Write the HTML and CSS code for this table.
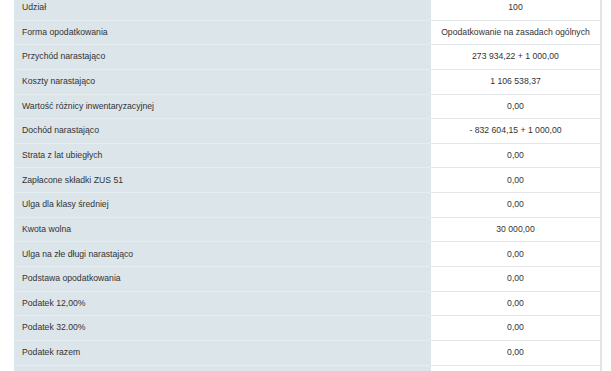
FILE: index.html
```html
<!DOCTYPE html>
<html lang="pl">
<head>
<meta charset="utf-8">
<title>Podsumowanie</title>
<link rel="stylesheet" href="styles.css">
</head>
<body>
<div class="page">
  <table class="summary">
    <tbody>
      <tr><th>Udział</th><td>100</td></tr>
      <tr><th>Forma opodatkowania</th><td>Opodatkowanie na zasadach ogólnych</td></tr>
      <tr><th>Przychód narastająco</th><td>273 934,22 + 1 000,00</td></tr>
      <tr><th>Koszty narastająco</th><td>1 106 538,37</td></tr>
      <tr><th>Wartość różnicy inwentaryzacyjnej</th><td>0,00</td></tr>
      <tr><th>Dochód narastająco</th><td>- 832 604,15 + 1 000,00</td></tr>
      <tr><th>Strata z lat ubiegłych</th><td>0,00</td></tr>
      <tr><th>Zapłacone składki ZUS 51</th><td>0,00</td></tr>
      <tr><th>Ulga dla klasy średniej</th><td>0,00</td></tr>
      <tr><th>Kwota wolna</th><td>30 000,00</td></tr>
      <tr><th>Ulga na złe długi narastająco</th><td>0,00</td></tr>
      <tr><th>Podstawa opodatkowania</th><td>0,00</td></tr>
      <tr><th>Podatek 12,00%</th><td>0,00</td></tr>
      <tr><th>Podatek 32.00%</th><td>0,00</td></tr>
      <tr><th>Podatek razem</th><td>0,00</td></tr>
      <tr><th>&nbsp;</th><td>&nbsp;</td></tr>
    </tbody>
  </table>
</div>
</body>
</html>
```
FILE: styles.css
```css
html, body {
  margin: 0;
  padding: 0;
  background: #ffffff;
}

.page {
  padding-left: 14px;
  margin-top: -5px;
}

.summary {
  border-collapse: collapse;
  width: 588px;
  table-layout: fixed;
  font-family: "Liberation Sans", Arial, sans-serif;
  font-size: 8.67px;
  line-height: 13.33px;
  color: #333333;
}

.summary th,
.summary td {
  height: 13.33px;
  padding: 5.17px 8px;
  border-top: 1px solid #e2e6e9;
  vertical-align: middle;
  white-space: nowrap;
  overflow: hidden;
}

.summary th {
  width: 401px;
  text-align: left;
  font-weight: normal;
  background: #dce5ea;
  border-top-color: #e6edf0;
}

.summary td {
  text-align: center;
  background: #ffffff;
  border-right: 2px solid #e1e3e5;
}
```
